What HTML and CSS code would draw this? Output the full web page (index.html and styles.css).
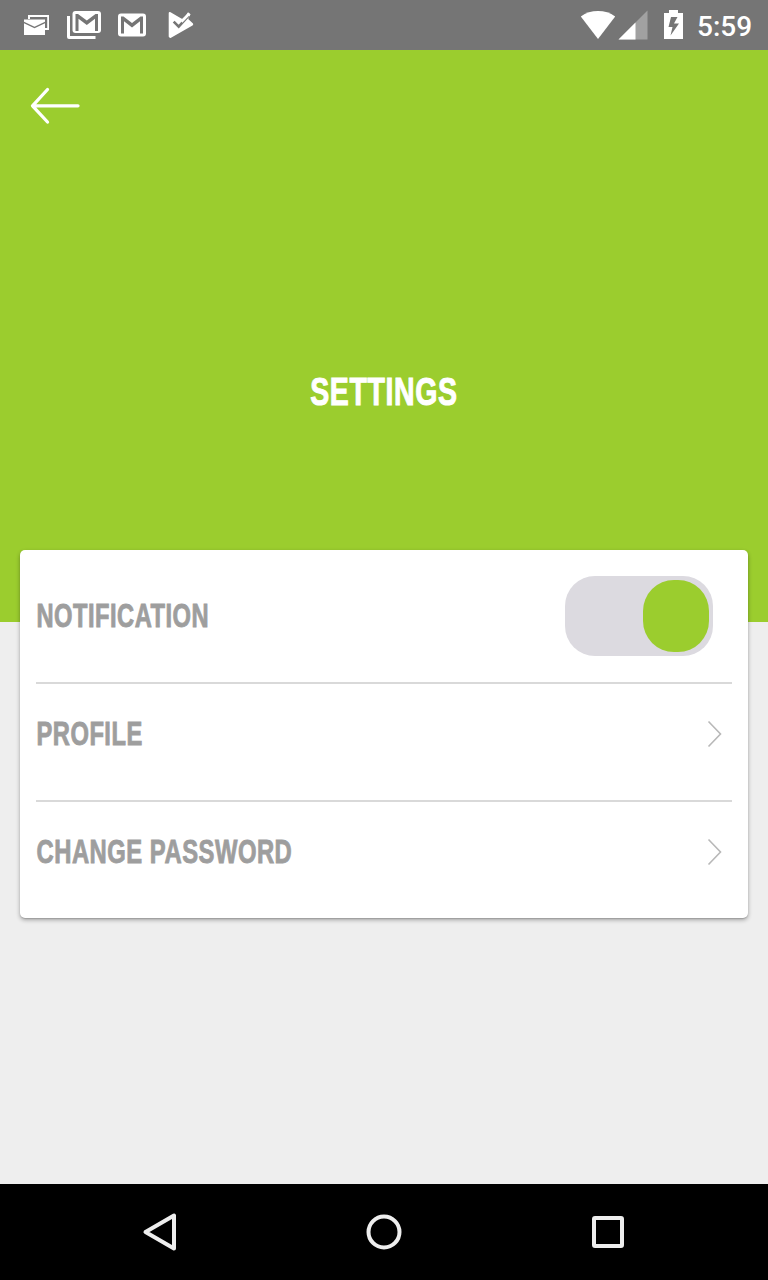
FILE: index.html
```html
<!DOCTYPE html>
<html lang="en">
<head>
<meta charset="utf-8">
<title>Settings</title>
<link rel="stylesheet" href="styles.css">
</head>
<body>
<div class="screen">
  <div class="status-bar">
    <svg class="status-icons" width="210" height="50" viewBox="0 0 210 50" fill="#fff">
      <path d="M28 15h21v15h-4v-2h2.200V17H30v2h-2z"/>
      <path d="M24 19.500h21v2.200L34.500 26.800 24 21.800z"/>
      <path d="M24 23.300l10.500 5 10.500-5V35H24z"/>
      <path d="M67 16h3v20h25.500v3H69a2 2 0 0 1-2-2z"/>
      <rect x="72.500" y="11" width="28.500" height="22" rx="3"/>
      <rect x="118" y="13.500" width="28" height="23" rx="3"/>
      <g fill="#757575">
        <path d="M75.500 31V14h2.500l8.800 6.500L95.500 14H98v17h-3V18.800l-8.200 6.200-8.300-6.200V31z"/>
        <path d="M121 33.500V16.500h2.500l8.500 6.500 8.500-6.500h2.500v17h-3V21.200L132 27.500l-8-6.300v12.300z"/>
      </g>
      <path d="M171 12.500l9 5.200 3.200 1.800 4.800-7.200 2.500 2-2.300 4.700 4.800 4.500a1.500 1.500 0 0 1-.5 2L171 37.700a1.600 1.600 0 0 1-2.300-1.500V13.500a1.300 1.300 0 0 1 2.300-1z"/>
      <path d="M173.700 21.700l5 5 10-11" fill="none" stroke="#757575" stroke-width="2.600"/>
      <path d="M180.500 20.500L188.300 12.700l2 1.700-8 8.300z"/>
    </svg>
    <div class="status-right">
      <svg width="108" height="50" viewBox="0 0 108 50" fill="#fff">
        <path d="M.8 16.500C10.500 9.300 25.500 9.300 35.200 16.500L18 39z"/>
        <path d="M67.500 10.500v29H38.500z" opacity=".32"/>
        <path d="M55.500 22.500v17h-17z"/>
        <path fill-rule="evenodd" d="M89 10h9v3h5v26H84V13h5zM91 17L88.500 27h4L90.500 35.500 99 23.500h-5l3.500-6.500z"/>
      </svg>
      <span class="clock">5:59</span>
    </div>
  </div>
  <header class="hero">
    <svg class="back" width="52" height="40" viewBox="0 0 52 40" fill="none" stroke="#fff" stroke-width="3.300" stroke-linecap="round" stroke-linejoin="round"><path d="M18.500 4.500L3.500 20.800l15 16.200M3.500 20.800h45.500"/></svg>
    <h1 class="title">SETTINGS</h1>
  </header>
  <main class="card">
    <div class="row row-toggle">
      <span class="label label-notification">NOTIFICATION</span>
      <span class="toggle"><span class="knob"></span></span>
    </div>
    <div class="row">
      <span class="label label-profile">PROFILE</span>
      <svg class="chevron" width="16" height="28" viewBox="0 0 16 28"><path d="M1.500 1.500L13.500 14l-12 12.500"/></svg>
    </div>
    <div class="row">
      <span class="label label-password">CHANGE PASSWORD</span>
      <svg class="chevron" width="16" height="28" viewBox="0 0 16 28"><path d="M1.500 1.500L13.500 14l-12 12.500"/></svg>
    </div>
  </main>
  <nav class="nav-bar">
    <svg width="48" height="48" viewBox="0 0 48 48"><path d="M38 7.500v33L9.500 24z"/></svg>
    <svg width="48" height="48" viewBox="0 0 48 48"><circle cx="24" cy="24" r="15.500"/></svg>
    <svg width="48" height="48" viewBox="0 0 48 48"><rect x="10" y="10" width="28" height="28" rx="1"/></svg>
  </nav>
</div>
</body>
</html>
```
FILE: styles.css
```css
* { box-sizing: border-box; }
body { margin: 0; font-family: "Liberation Sans", Arial, sans-serif; }
svg { display: block; flex: none; }
.screen { width: 768px; height: 1280px; display: flex; flex-direction: column; background: #eee; overflow: hidden; }
.status-bar { height: 50px; flex: none; background: #757575; display: flex; justify-content: space-between; }
.status-right { display: flex; align-items: center; width: 188px; }
.clock { font: 500 28px/50px Roboto, sans-serif; color: #fff; margin-left: 9px; padding-top: 3px; white-space: nowrap; }
.hero { height: 572px; flex: none; background: #9bcd2e; display: flex; flex-direction: column; align-items: center; padding-top: 35px; }
.back { align-self: flex-start; margin-left: 29px; }
.title { margin: 244px 0 0; font-size: 38px; line-height: 46px; font-weight: 700; color: #fff; letter-spacing: .8px; text-indent: .8px; transform: scaleX(.750); -webkit-text-stroke: 1px #fff; }
.card { margin: -72px 20px 0; height: 368px; flex: none; padding: 0 16px; background: #fff; border-radius: 5px; box-shadow: 0 2px 4px rgba(0, 0, 0, .32), 0 1px 1px rgba(0, 0, 0, .12); }
.row { height: 118px; display: flex; align-items: center; justify-content: space-between; padding-bottom: 16px; }
.row + .row { border-top: 2px solid #d9d9d9; }
.row-toggle { height: 132px; padding-bottom: 0; }
.label { font-size: 33.500px; line-height: 40px; font-weight: 700; color: #9e9e9e; white-space: nowrap; letter-spacing: .7px; transform-origin: left center; -webkit-text-stroke: .9px #9e9e9e; }
.label-notification { transform: translateX(.5px) scaleX(.707); }
.label-profile { transform: translateX(.5px) scaleX(.708); }
.label-password { transform: translateX(.5px) scaleX(.711); }
.toggle { width: 148px; height: 80px; margin-right: 19px; padding: 4px; display: flex; justify-content: flex-end; background: #dcdae0; border-radius: 30px; }
.knob { width: 66px; height: 72px; background: #9bcd2e; border-radius: 31px; }
.chevron { margin-right: 9px; fill: none; stroke: #b8b8b8; stroke-width: 1.600; }
.nav-bar { height: 96px; flex: none; margin-top: auto; padding: 0 136px; background: #000; display: flex; align-items: center; justify-content: space-between; }
.nav-bar svg { fill: none; stroke: #eee; stroke-width: 4; stroke-linejoin: round; }
```
